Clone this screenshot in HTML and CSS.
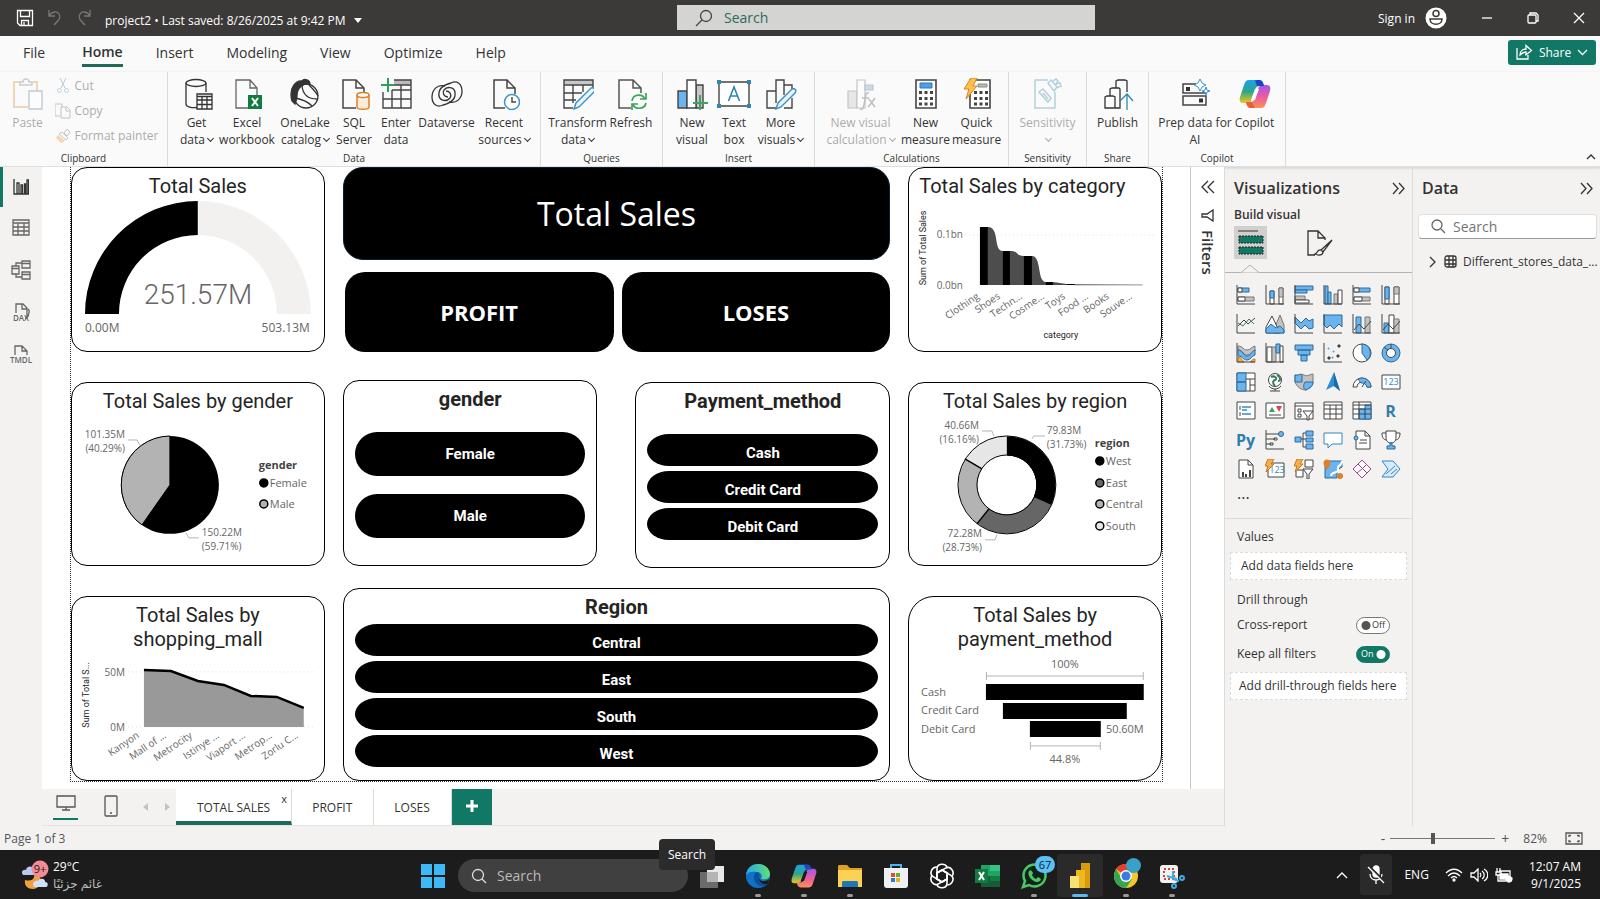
FILE: index.html
```html
<!DOCTYPE html>
<html lang="en">
<head>
    <meta charset="UTF-8">
    <meta name="viewport" content="width=device-width, initial-scale=1.0">
    <title>project2</title>
    <link rel="stylesheet" href="styles.css">
</head>
<body>

    <header class="titlebar">
        <div class="titlebar-left">
            <button class="plain" aria-label="Save"><svg width="18" height="18" viewBox="0 0 18 18" class="line"><path d="M1.5 1.5h15v15H4l-2.500-2.500zM4.500 1.500v6h9v-6M5.500 16.500v-5h7v5M8 16v-3"/></svg></button>
            <button class="plain dim" aria-label="Undo"><svg width="16" height="18" viewBox="0 0 16 18" class="line"><path d="M2 1v6h6M2 7c3-5 8-5 10-2s1 5-5 11"/></svg></button>
            <button class="plain dim" aria-label="Redo"><svg width="16" height="18" viewBox="0 0 16 18" class="line"><path d="M14 1v6H8M14 7C11 2 6 2 4 5s-1 5 5 11"/></svg></button>
            <button class="plain file-name">project2 • Last saved: 8/26/2025 at 9:42 PM <svg width="8" height="5" viewBox="0 0 8 5"><path d="M0 0h8L4 5z" fill="#fff"/></svg></button>
        </div>
        <label class="title-search">
            <svg width="18" height="18" viewBox="0 0 18 18" class="line"><circle cx="11" cy="7" r="5.500"/><path d="M7 11l-6 6"/></svg>
            <input type="text" placeholder="Search" aria-label="Search commands">
        </label>
        <div class="titlebar-right">
            <a href="#" class="sign-in">Sign in</a>
            <svg width="22" height="22" viewBox="0 0 22 22"><circle cx="11" cy="11" r="10.500" fill="#fff"/><g fill="none" stroke="#3b3a39" stroke-width="1.500"><circle cx="11" cy="6.500" r="3"/><path d="M5 12h12c0 7-12 7-12 0z"/></g></svg>
            <button class="plain" aria-label="Minimize"><svg width="12" height="12" viewBox="0 0 12 12" class="line"><path d="M1 6h10"/></svg></button>
            <button class="plain" aria-label="Restore"><svg width="12" height="12" viewBox="0 0 12 12" class="line"><rect x="1" y="3" width="8" height="8" rx="1"/><path d="M3 3V1h6l2 2v6H9"/></svg></button>
            <button class="plain" aria-label="Close"><svg width="12" height="12" viewBox="0 0 12 12" class="line"><path d="M1 1l10 10M11 1L1 11"/></svg></button>
        </div>
    </header>

    <nav class="tabs">
        <a href="#">File</a>
        <a href="#" class="active">Home</a>
        <a href="#">Insert</a>
        <a href="#">Modeling</a>
        <a href="#">View</a>
        <a href="#">Optimize</a>
        <a href="#">Help</a>
        <button class="share"><svg width="17" height="16" viewBox="0 0 17 16" class="line"><path d="M1 4v11h11v-4M4 11c0-4 3-6 6-6V1.500l5.500 5L10 11V8c-3 0-4 1-6 3z"/></svg>Share<svg width="11" height="7" viewBox="0 0 11 7" class="line"><path d="M1 1l4.500 4.500L10 1"/></svg></button>
    </nav>

    <section class="ribbon">
        <div class="group clipboard">
            <div class="tools">
                <button class="tool off"><svg width="32" height="32" viewBox="0 0 32 32"><g fill="none" stroke-width="1.400"><path stroke="#e8a055" stroke-width="2" d="M9 4H2v25h14M21 4h4v9"/><path stroke="#888" d="M8 7V4h3c0-4 6-4 6 0h3v3z"/><path stroke="#6d8595" fill="#fff" d="M17 13h13v18H17z"/></g></svg><span>Paste</span></button>
                <div class="small-tools">
                    <button class="off"><svg width="16" height="16" viewBox="0 0 16 16" fill="none"><path stroke="#777" d="M5 0l5 10M11 0L6 10"/><g stroke="#4a9fd0"><circle cx="4.500" cy="12.500" r="2"/><circle cx="11.500" cy="12.500" r="2"/></g></svg>Cut</button>
                    <button class="off"><svg width="16" height="16" viewBox="0 0 16 16" fill="none" stroke="#777"><path d="M5 13H0V1h7v3M6 4h6l3 3v8H6zM11 4v4h4"/></svg>Copy</button>
                    <button class="off"><svg width="16" height="16" viewBox="0 0 16 16"><path d="M9 5l3-4 3 3-3 4z" fill="none" stroke="#777"/><path d="M4 6l3-2 6 6-2 2z" fill="none" stroke="#777"/><path d="M3 7l7 6-4 2-5-5z" fill="#f0a04b"/></svg>Format painter</button>
                </div>
            </div>
            <h2>Clipboard</h2>
        </div>

        <div class="group data">
            <div class="tools">
                <button class="tool"><svg width="32" height="32" viewBox="0 0 32 32" class="line"><path d="M5 5v21c0 3 6 4 11 3.500M25 5v9"/><ellipse cx="15" cy="5" rx="10" ry="3.500"/><path fill="#fff" d="M16 16h15v15H16z"/><path d="M16 18.500h15M16 22h15M16 26.500h15M21 18v13M26 18v13"/></svg><span>Get <span class="last">data<i class="caret"></i></span></span></button>
                <button class="tool"><svg width="32" height="32" viewBox="0 0 32 32"><path d="M17 30H5V2h14l7 8v8M19 2v8h7" fill="none" stroke="#666" stroke-width="1.300"/><path d="M17 17h14v14H17z" fill="#107c41"/><path d="M21 20l6 8M27 20l-6 8" stroke="#fff" stroke-width="2"/></svg><span>Excel workbook</span></button>
                <button class="tool"><svg width="32" height="32" viewBox="0 0 32 32" class="line"><circle cx="17" cy="18" r="12"/><path d="M3 23C-1 9 8 2 13 3c2-3 8-1 8 3-5-1-14 2-13 14l-2 6z" fill="#333"/><path d="M13 8c1 9 7 13 15 13M6 20c6 1 12 3 17 8M20 7c4 4 7 7 9 11"/></svg><span>OneLake <span class="last">catalog<i class="caret"></i></span></span></button>
                <button class="tool"><svg width="32" height="32" viewBox="0 0 32 32"><path d="M18 30H5V2h13l8 8v4M18 2v8h8" fill="none" stroke="#444" stroke-width="1.500"/><path d="M19 17v12c0 3 12 3 12 0V17" fill="#fdebd9" stroke="#d9822b" stroke-width="1.500"/><ellipse cx="25" cy="17" rx="6" ry="2.500" fill="#fff" stroke="#d9822b" stroke-width="1.500"/></svg><span>SQL Server</span></button>
                <button class="tool"><svg width="32" height="32" viewBox="0 0 32 32"><path d="M14 2h17v5H14z" fill="#bbb"/><path d="M14 2h17v28H3V14M3 21h28M12 12h19M12 12v18M21 7v23M14 7h17" fill="none" stroke="#444" stroke-width="1.400"/><path d="M8 0v14M1 7h14" stroke="#2e9e5b" stroke-width="2"/></svg><span>Enter data</span></button>
                <button class="tool"><svg width="32" height="32" viewBox="0 0 32 32" class="line"><path d="M18 24c8 2 13-4 13-11S26 2 20 5C12 7 7 11 8 18c1 5 8 6 11 2 2-3 0-7-4-7"/><path d="M14 8C6 6 1 12 1 19s5 11 11 8c8-2 13-6 12-13-1-5-8-6-11-2-2 3 0 7 4 7"/></svg><span>Dataverse</span></button>
                <button class="tool"><svg width="32" height="32" viewBox="0 0 32 32"><path d="M17 30H6V2h13l8 8v6M19 2v8h8" fill="none" stroke="#444" stroke-width="1.500"/><circle cx="24" cy="24" r="7.500" fill="#fff" stroke="#3a96c8" stroke-width="1.500"/><path d="M24 19v5h4" fill="none" stroke="#444" stroke-width="1.400"/></svg><span>Recent <span class="last">sources<i class="caret"></i></span></span></button>
            </div>
            <h2>Data</h2>
        </div>

        <div class="group queries">
            <div class="tools">
                <button class="tool"><svg width="32" height="32" viewBox="0 0 32 32"><path d="M2 2h29v5H2z" fill="#c8c8c8"/><path d="M11 30H2V2h29v9M2 7h29M2 15h18M2 22h12M11 7v18M21 7v7" fill="none" stroke="#444" stroke-width="1.400"/><path d="M12 31l2-6 15-15c3-1 5 1 3 4L17 29z" fill="#e8f4fc" stroke="#3a8fc4" stroke-width="1.400"/></svg><span>Transform <span class="last">data<i class="caret"></i></span></span></button>
                <button class="tool"><svg width="32" height="32" viewBox="0 0 32 32"><path d="M16 30H4V2h14l8 8v5M18 2v8h8" fill="none" stroke="#555" stroke-width="1.500"/><path d="M17 23c1-7 10-8 13-2M31 15v6h-6M31 25c-1 6-10 7-13 2M17 32v-6h6" fill="none" stroke="#3fa35c" stroke-width="1.700"/></svg><span>Refresh</span></button>
            </div>
            <h2>Queries</h2>
        </div>

        <div class="group insert">
            <div class="tools">
                <button class="tool"><svg width="32" height="32" viewBox="0 0 32 32" stroke="#444" stroke-width="1.400"><path d="M2 13h9v17H2z" fill="#6cb4ee"/><path d="M20 7h7v23h-7z" fill="#c8c8c8"/><path d="M11 2h9v28h-9z" fill="#fff"/><path d="M24 17v15M17 25h15" stroke="#3fa35c" stroke-width="2"/></svg><span>New visual</span></button>
                <button class="tool"><svg width="34" height="32" viewBox="0 0 34 32"><path d="M2 4h30v24H2z" fill="#fff" stroke="#444" stroke-width="1.400"/><path d="M0 2h4v4H0zM30 2h4v4h-4zM0 26h4v4H0zM30 26h4v4h-4z" fill="#2f87b5"/><path d="M11.500 23L17 9l5.500 14M13.500 18h7" fill="none" stroke="#2f87b5" stroke-width="1.600"/></svg><span>Text box</span></button>
                <button class="tool"><svg width="32" height="32" viewBox="0 0 32 32" fill="none" stroke="#444" stroke-width="1.400"><path d="M11 30H2V13h9M11 25V2h8v15M19 7h8v4M27 20v10h-8"/><path d="M11 31l2-6 14-14c3-1 5 1 3 4L16 29z" fill="#e8f4fc" stroke="#3a8fc4"/></svg><span>More <span class="last">visuals<i class="caret"></i></span></span></button>
            </div>
            <h2>Insert</h2>
        </div>

        <div class="group calculations">
            <div class="tools">
                <button class="tool off"><svg width="32" height="32" viewBox="0 0 32 32" stroke="#777" stroke-width="1.200"><path d="M3 13h9v17H3z" fill="#ccc"/><path d="M12 2h8v28h-8z" fill="#fff"/><path d="M20 7h8v5h-8z" fill="#6cb4ee"/><path d="M24 15c-5-2-3 8-6 15-1 2-3 1-3 1M17 20h7M24 21l6 8M30 20c-2 3-4 6-7 9" fill="none" stroke="#666" stroke-width="1.500"/></svg><span>New visual <span class="last">calculation<i class="caret"></i></span></span></button>
                <button class="tool"><svg width="32" height="32" viewBox="0 0 32 32"><path d="M6 2h20v28H6z" fill="#fff" stroke="#444" stroke-width="1.600"/><path d="M10 5h12v5H10z" fill="#4a9fe8" stroke="#2b7cb8"/><path d="M9 14.500h14M9 20.500h14M9 26h14" stroke="#444" stroke-width="3" stroke-dasharray="3 2.500"/></svg><span>New measure</span></button>
                <button class="tool"><svg width="32" height="32" viewBox="0 0 32 32"><path d="M9 2h20v28H9z" fill="#fff" stroke="#444" stroke-width="1.600"/><path d="M17 6h9v3h-9z" fill="#bbb" stroke="#888"/><path d="M13 14.500h14M13 20.500h14M13 26h14" stroke="#444" stroke-width="3" stroke-dasharray="3 2.500"/><path d="M10 0h6l-4 8h4L5 21l3-10H3z" fill="#ffc14d" stroke="#d98324"/></svg><span>Quick measure</span></button>
            </div>
            <h2>Calculations</h2>
        </div>

        <div class="group sensitivity">
            <div class="tools">
                <button class="tool off"><svg width="32" height="32" viewBox="0 0 32 32" fill="none" stroke="#4a93b8" stroke-width="1.500"><path d="M17 2H4v28h20V14"/><path d="M8 14l4-3 8 9-3 4zM12 15l5 6"/><path d="M17 5l3-3 6 7-3 4zM21 4l4-3 2 2-2 3 4-1 1 3-5 2"/></svg><span>Sensitivity <i class="caret"></i></span></button>
            </div>
            <h2>Sensitivity</h2>
        </div>

        <div class="group share-group">
            <div class="tools">
                <button class="tool"><svg width="32" height="32" viewBox="0 0 32 32" class="line"><path d="M3 19l2-1h6l2 1v11H3zM8 18v-7l2-1h7l1 1v19h-5M14 10V3l2-1h7l2 1v11M18 30v-5"/><path d="M25 32V17M18 23l7-7 6 7" stroke="#2f87b5"/></svg><span>Publish</span></button>
            </div>
            <h2>Share</h2>
        </div>

        <div class="group copilot">
            <div class="tools">
                <button class="tool"><svg width="32" height="32" viewBox="0 0 32 32"><path d="M17 6H4v9h23v-2M4 18h23v9H4z" fill="none" stroke="#444" stroke-width="1.500"/><path d="M7 9h4v4H7zM20 20.500h4v4h-4z" fill="#333"/><path d="M21 1l2 4 4 2-4 2-2 4-2-4-4-2 4-2zM27 9l1 3 3 1-3 1-1 3-1-3-3-1 3-1z" fill="#fff" stroke="#3a96c8"/></svg><span>Prep data for AI</span></button>
                <button class="tool"><svg width="32" height="32" viewBox="0 0 32 32">
                    <defs>
                        <linearGradient id="cpA" x1="0" y1="0" x2="0" y2="1"><stop offset="0" stop-color="#1ba0ea"/><stop offset=".5" stop-color="#2fa58b"/><stop offset="1" stop-color="#f3c51c"/></linearGradient>
                        <linearGradient id="cpB" x1="0" y1="0" x2="0" y2="1"><stop offset="0" stop-color="#a259e6"/><stop offset=".5" stop-color="#ea5aa5"/><stop offset="1" stop-color="#fb9152"/></linearGradient>
                    </defs>
                    <path d="M10 2h10c3 0 4 2 5 6h-4c-3 0-4 1-5 4l-3 9c-1 3-2 4-5 4H5c-4 0-5-2-4-6l4-12c1-3 2-5 5-5z" fill="url(#cpA)"/>
                    <path d="M22 30H12c-3 0-4-2-5-6h4c3 0 4-1 5-4l3-9c1-3 2-4 5-4h3c4 0 5 2 4 6l-4 12c-1 3-2 5-5 5z" fill="url(#cpB)"/>
                    <path d="M16 2h4c3 0 4 2 5 6h-7z" fill="#1b46c4"/><path d="M16 30h-4c-3 0-4-2-5-6h6z" fill="#e8603c"/><path d="M16 11h4l-4 11h-4z" fill="#fff"/></svg><span>Copilot</span></button>
            </div>
            <h2>Copilot</h2>
        </div>
        <button class="plain collapse" aria-label="Collapse the ribbon"><svg width="10" height="7" viewBox="0 0 10 7" class="line"><path d="M1 6l4-4 4 4"/></svg></button>
    </section>

    <main class="workspace">
        <nav class="rail">
            <button class="current" aria-label="Report view"><svg width="16" height="16" viewBox="0 0 16 16" class="line"><path d="M1 0v15h15M4 15V4h2v11M8 15V6h1.500v9M11.500 15V5h1v10M14 15V1h1.500v14"/></svg></button>
            <button aria-label="Table view"><svg width="18" height="18" viewBox="0 0 18 18" class="line"><path d="M1 1h16v15H1zM1 4h16M1 8h16M1 12h16M6 4v12M12 4v12"/></svg></button>
            <button aria-label="Model view"><svg width="20" height="20" viewBox="0 0 20 20" class="line"><path d="M1 6h7v8H1zM1 8.500h7M11 1h8v7h-8zM11 3.500h8M11 12h8v7h-8zM11 14.500h8M5 6V3h6M5 14v3h6"/></svg></button>
            <button aria-label="DAX query view"><svg width="20" height="20" viewBox="0 0 20 20" class="line"><path d="M5 11V2h7l4 4v10h-2M11 2v5h5M17 7c2 1 1 6-1 9"/></svg><small>DAX</small></button>
            <button aria-label="TMDL view"><svg width="20" height="20" viewBox="0 0 20 20" class="line"><path d="M4 11V2h7l5 5v4M11 2v5h5"/></svg><small>TMDL</small></button>
        </nav>

        <div class="center">
            <div class="canvas">
                <div class="page">
                    <div class="side">
                        <article class="card">
                            <h3>Total Sales</h3>
                            <svg class="chart" viewBox="0 0 252 150">
                                <path d="M13 116A113 113 0 0 1 126 3V37A79 79 0 0 0 47 116z"/>
                                <path d="M126 3A113 113 0 0 1 239 116H205A79 79 0 0 0 126 37z" fill="#f2f1f0"/>
                                <text x="126" y="106" class="value">251.57M</text>
                                <text x="13" y="134" class="t12">0.00M</text>
                                <text x="238" y="134" class="t12 end">503.13M</text>
                            </svg>
                        </article>
                        <article class="card">
                            <h3>Total Sales by gender</h3>
                            <svg class="chart" viewBox="0 0 252 150">
                                <circle cx="98" cy="72" r="49"/>
                                <path d="M98 72L70 112A49 49 0 0 1 98 23z" fill="#b3b3b3" stroke="#000"/>
                                <path d="M56 27h9l3 5M114 120l3 5h10" class="leader"/>
                                <text x="53" y="25" class="end">101.35M</text>
                                <text x="53" y="39" class="end">(40.29%)</text>
                                <text x="130" y="123">150.22M</text>
                                <text x="130" y="137">(59.71%)</text>
                                <text x="187" y="56" class="t11 strong">gender</text>
                                <g stroke="#000" stroke-width="1.500"><circle cx="192" cy="70" r="4"/><circle cx="192" cy="91" r="4" fill="#b3b3b3"/></g>
                                <text x="198" y="74" class="t11">Female</text>
                                <text x="198" y="95" class="t11">Male</text>
                            </svg>
                        </article>
                        <article class="card">
                            <h3>Total Sales by shopping_mall</h3>
                            <svg class="chart" viewBox="0 0 252 128">
                                <path d="M56 21h186M56 76h186" class="gridline"/>
                                <path d="M72 19l27 1 27 10 26 4 27 11 26 1 27 11v19H72z" fill="#999"/>
                                <path d="M72 19l27 1 27 10 26 4 27 11 26 1 27 11" fill="none" stroke="#000" stroke-width="2.500"/>
                                <text x="53" y="25" class="end">50M</text>
                                <text x="53" y="80" class="end">0M</text>
                                <text transform="translate(17 44) rotate(-90)" class="axis">Sum of Total S...</text>
                                <g class="end">
                                    <text transform="translate(68 86) rotate(-34)">Kanyon</text>
                                    <text transform="translate(95 86) rotate(-34)">Mall of ...</text>
                                    <text transform="translate(121 86) rotate(-34)">Metrocity</text>
                                    <text transform="translate(148 86) rotate(-34)">Istinye ...</text>
                                    <text transform="translate(174 86) rotate(-34)">Viaport ...</text>
                                    <text transform="translate(201 86) rotate(-34)">Metrop...</text>
                                    <text transform="translate(227 86) rotate(-34)">Zorlu C...</text>
                                </g>
                            </svg>
                        </article>
                    </div>

                    <div class="middle">
                        <h1 class="banner">Total Sales</h1>
                        <div class="nav-buttons">
                            <button>PROFIT</button>
                            <button>LOSES</button>
                        </div>
                        <div class="slicers">
                            <article class="card slicer tall">
                                <h3>gender</h3>
                                <button>Female</button>
                                <button>Male</button>
                            </article>
                            <article class="card slicer">
                                <h3>Payment_method</h3>
                                <button>Cash</button>
                                <button>Credit Card</button>
                                <button>Debit Card</button>
                            </article>
                        </div>
                        <article class="card slicer region">
                            <h3>Region</h3>
                            <button>Central</button>
                            <button>East</button>
                            <button>South</button>
                            <button>West</button>
                        </article>
                    </div>

                    <div class="side">
                        <article class="card">
                            <h3 class="left">Total Sales by category</h3>
                            <svg class="chart" viewBox="0 0 252 150">
                                <path d="M56 37h190" class="gridline"/>
                                <path d="M79 29c12 0 5 24 15 24h7c10 0 5 5 14 5h8c10 0 5 26 14 26h7l14 2h8l68 1H79z" fill="#4d4d4d"/>
                                <path d="M71 29h8v58h-8zM94 53h7v34h-7zM115 58h8v29h-8zM137 84h7v3h-7zM158 86h8v1h-8z"/>
                                <path d="M166 87h68" stroke="#999"/>
                                <text x="54" y="40" class="end">0.1bn</text>
                                <text x="54" y="91" class="end">0.0bn</text>
                                <text transform="translate(17 50) rotate(-90)" class="axis">Sum of Total Sales</text>
                                <text x="152" y="140" class="axis">category</text>
                                <g class="end">
                                    <text transform="translate(71 100) rotate(-34)">Clothing</text>
                                    <text transform="translate(92 100) rotate(-34)">Shoes</text>
                                    <text transform="translate(114 100) rotate(-34)">Techn...</text>
                                    <text transform="translate(136 100) rotate(-34)">Cosme...</text>
                                    <text transform="translate(157 100) rotate(-34)">Toys</text>
                                    <text transform="translate(180 100) rotate(-34)">Food ...</text>
                                    <text transform="translate(201 100) rotate(-34)">Books</text>
                                    <text transform="translate(224 100) rotate(-34)">Souve...</text>
                                </g>
                            </svg>
                        </article>
                        <article class="card">
                            <h3>Total Sales by region</h3>
                            <svg class="chart" viewBox="0 0 252 150">
                                <!-- each arc is its share of a 100 unit circle -->
                                <g fill="none" stroke-width="19" transform="rotate(-90 98 72)">
                                    <circle cx="98" cy="72" r="39" pathLength="100" stroke="#e6e6e6"/>
                                    <circle cx="98" cy="72" r="39" pathLength="100" stroke="#b3b3b3" stroke-dasharray="83.84 100"/>
                                    <circle cx="98" cy="72" r="39" pathLength="100" stroke="#666" stroke-dasharray="60.46 100"/>
                                    <circle cx="98" cy="72" r="39" pathLength="100" stroke="#000" stroke-dasharray="31.73 100"/>
                                </g>
                                <g fill="none" stroke="#000"><circle cx="98" cy="72" r="49"/><circle cx="98" cy="72" r="30"/><path d="M68 111l12-15M56 46l17 10" stroke-width="1.500"/></g>
                                <path d="M73 18h10l2 5M123 26l2-3h11M76 127h10l2-5" class="leader"/>
                                <text x="70" y="16" class="end">40.66M</text>
                                <text x="70" y="30" class="end">(16.16%)</text>
                                <text x="138" y="21">79.83M</text>
                                <text x="138" y="35">(31.73%)</text>
                                <text x="73" y="124" class="end">72.28M</text>
                                <text x="73" y="138" class="end">(28.73%)</text>
                                <text x="186" y="34" class="t11 strong">region</text>
                                <g stroke="#000" stroke-width="1.500"><circle cx="191" cy="48" r="4"/><circle cx="191" cy="70" r="4" fill="#666"/><circle cx="191" cy="91" r="4" fill="#b3b3b3"/><circle cx="191" cy="113" r="4" fill="#e6e6e6"/></g>
                                <text x="197" y="52" class="t11">West</text>
                                <text x="197" y="74" class="t11">East</text>
                                <text x="197" y="95" class="t11">Central</text>
                                <text x="197" y="117" class="t11">South</text>
                            </svg>
                        </article>
                        <article class="card rounder">
                            <h3>Total Sales by payment_method</h3>
                            <svg class="chart" viewBox="0 0 252 128">
                                <path d="M77 33h158v16H77zM94 52h124v16H94zM121 70h71v16h-71z"/>
                                <path d="M77.500 21v8M77.500 25h157M234.500 21v8M121.500 91v8M121.500 95h70M191.500 91v8" class="leader"/>
                                <text x="156" y="17" class="t11 mid">100%</text>
                                <text x="156" y="112" class="t11 mid">44.8%</text>
                                <text x="12" y="45" class="t11">Cash</text>
                                <text x="12" y="63" class="t11">Credit Card</text>
                                <text x="12" y="82" class="t11">Debit Card</text>
                                <text x="235" y="82" class="t11 end">50.60M</text>
                            </svg>
                        </article>
                    </div>
                </div>

                <aside class="filters">
                    <button class="plain" aria-label="Expand filters"><svg width="14" height="14" viewBox="0 0 14 14" class="line"><path d="M7 1L1 7l6 6M13 1L7 7l6 6"/></svg></button>
                    <svg width="13" height="13" viewBox="0 0 13 13" class="line"><path d="M12 1v11L6 8H1V5h5z"/></svg>
                    <h2>Filters</h2>
                </aside>
            </div>

            <div class="page-tabs">
                <button class="view-mode on" aria-label="Desktop layout"><svg width="20" height="16" viewBox="0 0 20 16" class="line"><path d="M1 1h18v11H1zM10 12v3M6 15h8"/></svg></button>
                <button class="view-mode" aria-label="Mobile layout"><svg width="14" height="22" viewBox="0 0 14 22" class="line"><rect x="1" y="1" width="12" height="20" rx="1"/><path d="M6 18h2"/></svg></button>
                <div class="arrows"><svg width="5" height="8" viewBox="0 0 5 8"><path d="M5 0v8L0 4z"/></svg><svg width="5" height="8" viewBox="0 0 5 8"><path d="M0 0v8l5-4z"/></svg></div>
                <a href="#" class="page-tab selected">TOTAL SALES</a>
                <button class="plain close-page" aria-label="Delete page">x</button>
                <a href="#" class="page-tab">PROFIT</a>
                <a href="#" class="page-tab">LOSES</a>
                <button class="add-page" aria-label="New page"><svg width="12" height="12" viewBox="0 0 12 12"><path d="M6 0v12M0 6h12" stroke="#fff" stroke-width="3"/></svg></button>
            </div>
        </div>

        <aside class="pane visualizations">
            <div class="pane-head"><h2>Visualizations</h2><button class="plain" aria-label="Collapse"><svg width="13" height="13" viewBox="0 0 13 13" class="line"><path d="M1 1l5 5.500L1 12M7 1l5 5.500L7 12"/></svg></button></div>
            <h3>Build visual</h3>
            <div class="modes">
                <button class="chosen" aria-label="Build visual"><svg width="26" height="26" viewBox="0 0 26 26"><path d="M0 1h20" stroke="#333"/><g fill="#117865" stroke="#222" stroke-dasharray="2 1"><path d="M1 6h24v7H1zM1 17h24v7H1z"/></g></svg></button>
                <button aria-label="Format visual"><svg width="26" height="26" viewBox="0 0 26 26" class="line"><path d="M8 25H1V1h10l7 7v2M11 1v7h7M25 10L14 20l2 2zM14 20c-4-1-3 3-6 4 4 2 8 1 8-2"/></svg></button>
            </div>
            <svg class="pointer" width="20" height="9" viewBox="0 0 20 9"><path d="M0 8.500h1L10 1l9 7.500h1" fill="#f3f2f1" stroke="#b5b3b1"/></svg>
            <div class="viz-grid">
                <button aria-label="Stacked bar chart"><svg viewBox="0 0 20 20"><path class="b" d="M2 3h11v4H2z"/><path class="w" d="M2 3h4v4H2z"/><path class="g" d="M2 12h16v4H2z"/><path class="w" d="M2 12h7v4H2z"/><path d="M1 0v19h18"/></svg></button>
                <button aria-label="Stacked column chart"><svg viewBox="0 0 20 20"><path class="w" d="M5 6h4v13H5z"/><path class="b" d="M5 6h4v7H5z"/><path class="w" d="M14 3h4v16h-4z"/><path class="g" d="M14 3h4v9h-4z"/><path d="M1 0v19h18"/></svg></button>
                <button aria-label="Clustered bar chart"><svg viewBox="0 0 20 20"><path class="b" d="M1 1h18v4H1z"/><path class="b" d="M1 5h12v3H1z"/><path class="g" d="M1 11h10v4H1z"/><path class="w" d="M1 15h14v3H1z"/><path d="M1 0v19h18"/></svg></button>
                <button aria-label="Clustered column chart"><svg viewBox="0 0 20 20"><path class="b" d="M2 1h3v18H2z"/><path class="b" d="M5 7h3v12H5z"/><path class="g" d="M11 9h4v10h-4z"/><path class="w" d="M15 5h4v14h-4z"/><path d="M1 0v19h18"/></svg></button>
                <button aria-label="100% stacked bar chart"><svg viewBox="0 0 20 20"><path class="b" d="M2 3h16v4H2z"/><path class="w" d="M2 3h5v4H2z"/><path class="g" d="M2 12h16v4H2z"/><path class="w" d="M2 12h8v4H2z"/><path d="M1 0v19h18"/></svg></button>
                <button aria-label="100% stacked column chart"><svg viewBox="0 0 20 20"><path class="w" d="M4 2h4v17H4z"/><path class="b" d="M4 2h4v12H4z"/><path class="w" d="M13 2h5v17h-5z"/><path class="g" d="M13 2h5v7h-5z"/><path d="M1 0v19h18"/></svg></button>

                <button aria-label="Line chart"><svg viewBox="0 0 20 20"><path d="M1 0v19h18"/><path d="M2 12l6-6 4 4 7-6"/><path d="M2 9l5 3 6-7 5 5" class="green"/></svg></button>
                <button aria-label="Area chart"><svg viewBox="0 0 20 20"><path class="g" d="M9 15l6-14 4 10v8H9z"/><path class="w" d="M1 13l6-11 8 17H1z"/><path class="b" d="M1 15l5-5 5 4 4-2 4 4v3H1z"/></svg></button>
                <button aria-label="Stacked area chart"><svg viewBox="0 0 20 20"><path class="b" d="M1 3l6 6 5-5 3 3 4-2v9l-4 1-4-4-4 4-6-6z"/><path d="M1 0v19h18"/></svg></button>
                <button aria-label="100% stacked area chart"><svg viewBox="0 0 20 20"><path class="b" d="M1 1h18v12l-3-3-5 5-4-4-3 3-3-3z"/><path d="M1 0v19h18"/></svg></button>
                <button aria-label="Line and stacked column chart"><svg viewBox="0 0 20 20"><path class="b" d="M4 3h5v16H4z"/><path class="g" d="M13 3h5v16h-5z"/><path d="M1 0v19h18M2 16l5-6 5 5 7-8"/></svg></button>
                <button aria-label="Line and clustered column chart"><svg viewBox="0 0 20 20"><path class="b" d="M3 9h5v10H3z"/><path class="w" d="M8 1h5v18H8z"/><path class="g" d="M13 5h5v14h-5z"/><path d="M1 0v19h18M2 16l5-6 5 5 7-8"/></svg></button>

                <button aria-label="Ribbon chart"><svg viewBox="0 0 20 20"><path class="g" d="M2 3c5 0 5 4 9 4s4-3 8-4v5c-4 1-4 4-8 4S7 7 2 7z"/><path class="b" d="M2 7c5 0 5 6 9 6s4-5 8-6v5c-4 1-4 5-8 5s-4-4-9-4z"/><path class="o" d="M2 14c3 0 4 3 6 5H2zM14 19c2-2 3-3 5-3v3z"/><path d="M1 0v19h18"/></svg></button>
                <button aria-label="Waterfall chart"><svg viewBox="0 0 20 20"><path class="w" d="M2 4h5v15H2z"/><path class="g" d="M7 4h4v15H7z"/><path class="b" d="M11 1h4v9h-4z"/><path class="w" d="M15 3h3v16h-3z"/><path d="M1 0v19h18"/></svg></button>
                <button aria-label="Funnel"><svg viewBox="0 0 20 20"><path class="b" d="M1 2h18v5H1zM4 7h12v5H4zM7 12h6v6H7z"/></svg></button>
                <button aria-label="Scatter chart"><svg viewBox="0 0 20 20"><path d="M1 0v19h18"/><path d="M5 14h2v2H5zM15 2h2v2h-2zM14 12h2v2h-2z" fill="#333"/><path d="M5 5h1v1H5zM10 8h1v1h-1zM9 14h1v1H9z" stroke="#4a9fe0"/></svg></button>
                <button aria-label="Pie chart"><svg viewBox="0 0 20 20"><circle class="w" cx="10" cy="10" r="9"/><path class="b" d="M10 1a9 9 0 0 1 5 16l-5-7z"/></svg></button>
                <button aria-label="Donut chart"><svg viewBox="0 0 20 20"><circle class="b" cx="10" cy="10" r="9"/><circle class="w" cx="10" cy="10" r="4.500"/><path d="M10 1v4M3 4l4 3"/></svg></button>

                <button aria-label="Treemap"><svg viewBox="0 0 20 20"><path class="w" d="M1 1h18v18H1z"/><path class="b" d="M1 1h9v9H1zM1 10h9v9H1z"/><path d="M10 7h9M14 7v12M14 13h5"/></svg></button>
                <button aria-label="Map"><svg viewBox="0 0 20 20"><circle class="w" cx="10" cy="8" r="6.500"/><path class="green" d="M6 5c4-2 7 2 4 3s-2 4 0 6M12 3c4 2 4 6 1 6" stroke-width="2"/><path d="M16 14c-3 4-9 4-12 0M10 17v2M5 19h10"/></svg></button>
                <button aria-label="Filled map"><svg viewBox="0 0 20 20"><path class="g" d="M1 3c4 1 5-2 9 0s6-1 9-1v8c0 4-3 6-7 8-5 0-9-3-11-8z"/><path class="b" d="M1 3c4 1 5-2 7 0v7H1zM11 10h8c0 4-3 6-7 8-3-1-3-5-1-8z"/></svg></button>
                <button aria-label="Azure map"><svg viewBox="0 0 20 20"><path d="M11 0l6 19-6-5-8 4z" fill="#2f8fd0" stroke="none"/><path d="M11 0l6 19-6-5z" fill="#1a6ca8" stroke="none"/></svg></button>
                <button aria-label="Gauge"><svg viewBox="0 0 20 20"><path class="w" d="M1 15a9 9 0 0 1 18 0h-4a5 5 0 0 0-10 0z"/><path class="b" d="M6 7a9 9 0 0 1 13 8h-4a5 5 0 0 0-6-4z"/><path d="M10 15l4-6"/></svg></button>
                <button aria-label="Card"><svg viewBox="0 0 20 20"><path class="w" d="M1 3h18v14H1z"/><text x="10" y="13">123</text></svg></button>

                <button aria-label="Multi-row card"><svg viewBox="0 0 20 20"><path class="w" d="M1 1h18v17H1z"/><path d="M4 5v4M4 11v4"/><path d="M6 6h9M6 9h5M6 13h9" stroke="#2f8fd0" stroke-width="1.500"/></svg></button>
                <button aria-label="KPI"><svg viewBox="0 0 20 20"><path class="w" d="M1 2h18v15H1z"/><path d="M4 11l3-5 3 5z" fill="#3fa35c" stroke="none"/><path d="M11 5h6l-3 6z" fill="#d64550" stroke="none"/><path d="M4 14h12"/></svg></button>
                <button aria-label="Slicer"><svg viewBox="0 0 20 20"><path class="w" d="M1 2h18v16H1zM1 5h18M4 8h3v3H4zM4 13h3v3H4z"/><path class="w" d="M9 10h10l-4 5v4h-2v-4z"/></svg></button>
                <button aria-label="Table"><svg viewBox="0 0 20 20"><path class="w" d="M1 1h18v17H1zM1 4h18M1 8h18M1 13h18M7 4v14M13 4v14"/></svg></button>
                <button aria-label="Matrix"><svg viewBox="0 0 20 20"><path class="w" d="M1 1h18v17H1z"/><path class="b" d="M7 8h6v10H7zM13 4h6v14h-6z"/><path d="M1 4h18M1 8h18M1 13h18M7 1v17"/></svg></button>
                <button aria-label="R script visual" class="letters">R</button>

                <button aria-label="Python visual" class="letters">Py</button>
                <button aria-label="Key influencers"><svg viewBox="0 0 20 20"><path d="M1 0v19h18M1 4h13M1 9h9M1 14h5"/><circle class="b" cx="16" cy="4" r="2.500"/><path d="M9 8h3v2H9zM5 13h3v2H5z"/></svg></button>
                <button aria-label="Decomposition tree"><svg viewBox="0 0 20 20"><path d="M6 9h6M9 3v14M9 3h4M9 17h4"/><path class="b" d="M1 7h6v5H1zM12 1h7v5h-7zM12 8h7v4h-7zM12 14h7v5h-7z"/></svg></button>
                <button aria-label="Q&amp;A"><svg viewBox="0 0 20 20"><path fill="#fff" stroke="#2f87c5" d="M1 3h18v11H9l-4 4v-4H1z"/></svg></button>
                <button aria-label="Narrative"><svg viewBox="0 0 20 20"><path class="w" d="M4 1h9l5 5v13H4zM13 1v5h5"/><path d="M8 10h7M7 13h8"/><circle class="b" cx="4" cy="8" r="2"/></svg></button>
                <button aria-label="Goals"><svg viewBox="0 0 20 20"><path class="w" d="M5 3H1c0 5 2 7 5 7M15 3h4c0 5-2 7-5 7"/><path class="w" d="M5 1h10v6c0 4-2 6-5 6s-5-2-5-6z"/><path class="b" d="M9 13h2v3h3v3H6v-3h3z"/></svg></button>

                <button aria-label="Paginated report"><svg viewBox="0 0 20 20"><path class="w" d="M3 1h9l5 5v13H3zM12 1v5h5"/><path d="M7 18v-5M10 18v-3M14 18v-7" stroke-width="2"/></svg></button>
                <button aria-label="Card (new)"><svg viewBox="0 0 20 20"><path class="w" d="M3 4h16v14H3z"/><text x="12" y="14">123</text><path class="o" d="M3 0h6L6 5h3l-8 8 2-6H0z"/></svg></button>
                <button aria-label="Slicer (new)"><svg viewBox="0 0 20 20"><path class="w" d="M11 1h8v7h-8zM2 11h7v7H2z"/><path class="o" d="M3 0h6L6 5h3l-8 8 2-6H0z"/><path class="w" d="M9 10h10l-4 5v5h-2v-5z"/></svg></button>
                <button aria-label="ArcGIS map"><svg viewBox="0 0 20 20"><path class="b" d="M2 2h17v6l-5 3v8H2z"/><path d="M8 17c0-5 8-2 7-7s4-2 4-8" stroke="#fff" stroke-width="2"/><circle cx="4" cy="4" r="3.500" fill="#d9822b" stroke="none"/><circle cx="17" cy="17" r="3" fill="#d9822b" stroke="none"/><path d="M1 6h6l-3 5z" fill="#d9822b" stroke="none"/></svg></button>
                <button aria-label="Power Apps"><svg viewBox="0 0 20 20" class="purple"><path d="M6 5l4-4 9 9-9 9-9-9zM6 5l9 9M10 10l-5 4M14 6l-4 4"/></svg></button>
                <button aria-label="Power Automate"><svg viewBox="0 0 20 20"><path d="M1 2h11l7 8-7 8H1l6-8zM5 15l9-8M10 15l6-5" fill="#d7ebfa" stroke="#2f87c5"/></svg></button>
            </div>
            <button class="plain more" aria-label="More visuals">...</button>
            <div class="wells">
                <h3>Values</h3>
                <div class="well indent">Add data fields here</div>
                <h3>Drill through</h3>
                <div class="option"><label for="cross">Cross-report</label><span class="switch"><input type="checkbox" id="cross"><span>Off</span></span></div>
                <div class="option"><label for="keep">Keep all filters</label><span class="switch"><input type="checkbox" id="keep" checked><span>On</span></span></div>
                <div class="well">Add drill-through fields here</div>
            </div>
        </aside>

        <aside class="pane fields">
            <div class="pane-head"><h2>Data</h2><button class="plain" aria-label="Collapse"><svg width="13" height="13" viewBox="0 0 13 13" class="line"><path d="M1 1l5 5.500L1 12M7 1l5 5.500L7 12"/></svg></button></div>
            <label class="field-search"><svg width="15" height="15" viewBox="0 0 15 15" class="line"><circle cx="6" cy="6" r="5"/><path d="M10 10l4 4"/></svg><input type="text" placeholder="Search" aria-label="Search fields"></label>
            <a href="#" class="table-row"><svg width="7" height="12" viewBox="0 0 7 12" class="line"><path d="M1 1l5 5-5 5"/></svg><svg width="13" height="13" viewBox="0 0 13 13" class="line"><rect x="1" y="1" width="11" height="11" rx="2"/><path d="M1 5h11M1 9h11M5 1v11M9 1v11"/></svg><span>Different_stores_data_...</span></a>
        </aside>
    </main>

    <footer class="status">
        <span>Page 1 of 3</span>
        <div class="zoom">
            <button class="plain" aria-label="Zoom out">-</button>
            <input type="range" min="10" max="190" value="82" aria-label="Zoom">
            <button class="plain" aria-label="Zoom in">+</button>
            <span>82%</span>
            <button class="plain" aria-label="Fit to page"><svg width="18" height="13" viewBox="0 0 18 13" class="line"><path d="M1 1h16v11H1zM4 5V3.500h2M12 3.500h2V5M14 8v1.500h-2M6 9.500H4V8"/></svg></button>
        </div>
    </footer>

    <div class="taskbar">
        <div class="weather">
            <svg width="28" height="30" viewBox="0 0 28 30"><path d="M4 20c8 2 10-2 9-7 9 2 10 15-1 16-5 0-9-3-8-9z" fill="#f2a03d"/><path d="M13 27c-3-5 2-7 4-6 2-4 8-2 7 1 4 0 3 5 1 5z" fill="#cfe0fa"/><path d="M2 15c-3-4 1-6 3-5 1-5 8-4 8 0 3 0 3 5 0 5z" fill="#b9c9f2"/><circle cx="19" cy="9" r="8.500" fill="#f28b96"/><text x="19" y="13" text-anchor="middle">9+</text></svg>
            <p>29°C<br><span lang="ar">غائم جزئيًا</span></p>
        </div>
        <div class="apps">
            <button aria-label="Start"><svg width="26" height="26" viewBox="0 0 26 26"><path d="M1 1h11v11H1zM14 1h11v11H14zM1 14h11v11H1zM14 14h11v11H14z" fill="#3fb9f5"/></svg></button>
            <div class="search-wrap">
                <label class="task-search"><svg width="16" height="16" viewBox="0 0 16 16" class="line"><circle cx="7" cy="7" r="5.500"/><path d="M11 11l4 4"/></svg><input type="text" placeholder="Search" aria-label="Search Windows"></label>
                <span class="tooltip">Search</span>
            </div>
            <button aria-label="Task view"><svg width="26" height="26" viewBox="0 0 26 26"><path d="M1 9h18v16H1z" fill="#6b6b6b"/><path d="M8 3h17v16H8z" fill="#e8e8e8"/><path d="M8 9h11v10H8z" fill="#b4b4b4"/></svg></button>
            <button class="open" aria-label="Edge"><svg width="26" height="26" viewBox="0 0 26 26"><defs><linearGradient id="edge" x1="0" y1="0" x2="1" y2="0"><stop offset="0" stop-color="#28a8ea"/><stop offset="1" stop-color="#5fe070"/></linearGradient></defs><circle cx="13" cy="13" r="12" fill="#1170c8"/><path d="M1 12C2 4 8 1 13 1c8 0 12 6 12 10 0 5-5 6-9 5 2-3 0-7-4-7C7 8 3 9 1 12z" fill="url(#edge)"/><path d="M12 9c-5 2-4 11 3 14 4 1 7 0 9-3-6 2-11-1-10-6 0 0 2-3-2-5z" fill="#0c4f9e"/><path d="M14 14c0 2 1 3 3 4 3 0 5 0 7-2l-1 5c-5 1-10-2-9-7z" fill="#1c1c1c"/></svg></button>
            <button class="open" aria-label="Copilot"><svg width="26" height="26" viewBox="0 0 32 32"><path d="M10 2h10c3 0 4 2 5 6h-4c-3 0-4 1-5 4l-3 9c-1 3-2 4-5 4H5c-4 0-5-2-4-6l4-12c1-3 2-5 5-5z" fill="url(#cpA)"/><path d="M22 30H12c-3 0-4-2-5-6h4c3 0 4-1 5-4l3-9c1-3 2-4 5-4h3c4 0 5 2 4 6l-4 12c-1 3-2 5-5 5z" fill="url(#cpB)"/><path d="M16 2h4c3 0 4 2 5 6h-7z" fill="#1b46c4"/><path d="M16 11h4l-4 11h-4z" fill="#1c1c1c"/></svg></button>
            <button class="open" aria-label="File Explorer"><svg width="26" height="26" viewBox="0 0 26 26"><path d="M1 3c0-1 1-1 2-1h7l3 3h12v19H1z" fill="#e0a020"/><path d="M1 7h24v17H1z" fill="#fdd155"/><path d="M5 24v-4c0-2 1-2 2-2h12c1 0 2 0 2 2v4z" fill="#1e78b8"/></svg></button>
            <button aria-label="Store"><svg width="26" height="26" viewBox="0 0 26 26"><path d="M8 6V2h10v4" fill="none" stroke="#4ab4e6" stroke-width="2"/><path d="M1 5h24v17c0 2-1 3-3 3H4c-2 0-3-1-3-3z" fill="#f0f0f4"/><path d="M8 10h4v4H8z" fill="#d8532c"/><path d="M13 10h4v4h-4z" fill="#6fa82e"/><path d="M8 15h4v4H8z" fill="#2b7cc8"/><path d="M13 15h4v4h-4z" fill="#e8b022"/></svg></button>
            <button aria-label="ChatGPT"><svg width="26" height="26" viewBox="0 0 26 26" fill="none" stroke="#fff" stroke-width="1.600"><g id="petal"><path d="M8 14V6c0-6 8-6 10-2M8 10l5-3 6 3.500"/></g><use href="#petal" transform="rotate(60 13 13)"/><use href="#petal" transform="rotate(120 13 13)"/><use href="#petal" transform="rotate(180 13 13)"/><use href="#petal" transform="rotate(240 13 13)"/><use href="#petal" transform="rotate(300 13 13)"/></svg></button>
            <button aria-label="Excel"><svg width="26" height="26" viewBox="0 0 26 26"><path d="M6 2h19v22H6z" fill="#21a366"/><path d="M6 13h19v11H6z" fill="#185c37"/><path d="M15 2h10v6H15z" fill="#33c481"/><path d="M15 13h10v5H15z" fill="#107c41"/><path d="M0 6h13v14H0z" fill="#107c41"/><path d="M4 9l5 8M9 9l-5 8" stroke="#fff" stroke-width="2"/></svg></button>
            <button class="open" aria-label="WhatsApp"><svg width="26" height="26" viewBox="0 0 26 26"><path d="M2 24l2-6a11 11 0 1 1 4 4z" fill="#0d2416" stroke="#4bc768" stroke-width="2.500"/><path d="M8 8c2-2 3 0 4 2l-1 2c1 2 2 3 4 4l2-2c2 1 4 2 2 4-5 4-14-5-11-10z" fill="#4bc768"/></svg><span class="badge">67</span></button>
            <button class="open front" aria-label="Power BI"><svg width="26" height="26" viewBox="0 0 26 26"><path d="M14 0h9v25H14z" fill="#d89a10"/><path d="M9 7h9v18H9z" fill="#edb91f"/><path d="M3 13h9v12H3z" fill="#fbe07a"/></svg></button>
            <button class="open" aria-label="Chrome"><svg width="26" height="26" viewBox="0 0 26 26"><circle cx="13" cy="13" r="12" fill="#f5c828"/><path d="M13 13L3 6C7-1 20-1 24 8H13z" fill="#e2402f"/><path d="M3 6l6 10 4 9C3 25-2 15 3 6z" fill="#32a552"/><path d="M9 16l4 9 6-9z" fill="#32a552"/><circle cx="13" cy="13" r="6" fill="#fff"/><circle cx="13" cy="13" r="4.500" fill="#3b7de8"/></svg><span class="badge face"></span></button>
            <button class="open" aria-label="Snipping Tool"><svg width="26" height="26" viewBox="0 0 26 26"><rect x="1" y="2" width="18" height="18" rx="3" fill="#f2f2f2"/><path d="M5 6h10v10H5z" fill="none" stroke="#c44a3c" stroke-width="2" stroke-dasharray="2 2"/><g fill="none" stroke="#45a8dc" stroke-width="2"><path d="M14 8v8l6 2M8 13l10 3"/><circle cx="23" cy="15" r="2"/><circle cx="15" cy="23" r="2"/></g></svg></button>
        </div>
        <div class="tray">
            <svg width="12" height="8" viewBox="0 0 12 8" class="line"><path d="M1 7l5-5 5 5"/></svg>
            <span class="mic"><svg width="18" height="20" viewBox="0 0 18 20" class="line"><rect x="6" y="1" width="6" height="11" rx="3" fill="#fff"/><path d="M3 9c0 8 12 8 12 0M9 15v4"/><path d="M2 1l16 16" stroke="#2a2a2a" stroke-width="2"/><path d="M1 2l16 16"/></svg></span>
            <span class="lang">ENG</span>
            <svg width="18" height="14" viewBox="0 0 18 14" class="line"><path d="M1 5c5-5 11-5 16 0M3 8c4-4 8-4 12 0M6 10c2-2 4-2 6 0"/><circle cx="9" cy="12" r="1"/></svg>
            <svg width="18" height="14" viewBox="0 0 18 14" class="line"><path d="M1 5h3l4-4v12L4 9H1zM10 5c1 1 1 3 0 4M12 3c3 2 3 6 0 8M14 1c5 3 5 9 0 12"/></svg>
            <svg width="18" height="16" viewBox="0 0 18 16" class="line"><path d="M4 4h11v8M2 1v4M5 1v4M1 5h5v3H1zM3 8v6h8"/><path d="M5 7h8v5H5z" fill="#fff"/><path d="M14 9l3 2c0 3-1 4-3 4s-3-1-3-4z" fill="#fff"/></svg>
            <p class="clock">12:07 AM<br>9/1/2025</p>
        </div>
    </div>

</body>
</html>
```

FILE: styles.css
```css
* {
    box-sizing: border-box;
}

body {
    margin: 0;
    min-height: 100vh;
    display: flex;
    flex-direction: column;
    font-family: "Open Sans", "Noto Sans", "DejaVu Sans", sans-serif;
    font-size: 12px;
    color: #333;
    background-color: #f3f2f1;
}

h1, h2, h3, p {
    margin: 0;
    font-size: 12px;
    font-weight: normal;
}

a {
    color: inherit;
    text-decoration: none;
}

button, input {
    font: inherit;
    color: inherit;
    padding: 0;
    border: none;
    background: none;
}

button {
    cursor: pointer;
}

svg {
    flex: none;
}

.line {
    fill: none;
    stroke: currentColor;
    stroke-width: 1.3;
}

.plain {
    display: flex;
    align-items: center;
    justify-content: center;
}

/* title bar */
.titlebar {
    height: 36px;
    display: grid;
    grid-template-columns: 677fr 418px 505fr;
    background-color: #3b3a39;
    color: white;
}

.titlebar-left {
    display: flex;
    align-items: center;
    padding-left: 16px;
    gap: 13px;
}

.titlebar-left .dim {
    color: #777;
}

.file-name {
    gap: 8px;
    padding-top: 4px;
}

.title-search {
    margin: 5px 0 6px;
    display: flex;
    align-items: center;
    gap: 11px;
    padding-left: 18px;
    background-color: #d4d4d2;
    color: #444;
    font-size: 14px;
}

.title-search input,
.field-search input,
.task-search input {
    flex: 1;
    min-width: 0;
    outline: none;
}

.title-search input::placeholder {
    color: #2f6a5c;
    opacity: 1;
}

.titlebar-right {
    display: flex;
    align-items: center;
    justify-content: flex-end;
    padding-right: 15px;
}

.titlebar-right svg {
    display: block;
}

.sign-in {
    margin-right: 10px;
}

.titlebar-right .plain {
    margin-left: 34px;
}

/* ribbon tabs */
.tabs {
    height: 36px;
    display: flex;
    align-items: center;
    gap: 33px;
    padding: 0 4px 4px 23px;
    background-color: #fafafa;
    font-size: 14px;
}

.tabs .active {
    margin: 3px 0 0 4px;
    font-weight: 600;
    line-height: 24px;
    border-bottom: 3px solid #1f6b58;
}

.share {
    margin-left: auto;
    width: 88px;
    height: 25px;
    display: flex;
    align-items: center;
    justify-content: center;
    gap: 6px;
    border-radius: 3px;
    background-color: #117865;
    color: white;
    font-size: 12px;
}

/* ribbon */
.ribbon {
    height: 95px;
    display: flex;
    background-color: #fafafa;
    border-bottom: 1px solid #e1dfdd;
    box-shadow: 0 1px 3px rgba(0, 0, 0, 0.15);
}

.group {
    display: flex;
    flex-direction: column;
    justify-content: space-between;
    border-right: 1px solid #dddbd9;
}

.group h2 {
    font-size: 10px;
    line-height: 15px;
    text-align: center;
}

.tools {
    display: grid;
    justify-content: center;
    padding-top: 6px;
}

.tool {
    display: flex;
    flex-direction: column;
    align-items: center;
    gap: 4px;
    line-height: 17px;
}

.tool > span {
    width: min-content;
}

.last {
    white-space: nowrap;
}

.off {
    opacity: 0.4;
}

.caret {
    display: inline-block;
    width: 5px;
    height: 5px;
    margin: 0 0 3px 3px;
    border: solid currentColor;
    border-width: 0 1px 1px 0;
    transform: rotate(45deg);
}

.clipboard { width: 168px; }
.data { width: 373px; }
.queries { width: 122px; }
.insert { width: 152px; }
.calculations { width: 194px; }
.sensitivity { width: 78px; }
.share-group { width: 62px; }
.copilot { width: 137px; }

.clipboard .tools { grid-template-columns: 42px 106px; gap: 6px; }
.data .tools { grid-template-columns: 49px 52px 64px 34px 50px 51px 64px; }
.queries .tools { grid-template-columns: 57px 46px; gap: 2px; }
.insert .tools { grid-template-columns: 42px 42px 51px; }
.calculations .tools { grid-template-columns: 74px 56px 46px; }
.copilot .tools { grid-template-columns: 75px 44px; }

.calculations .tool:first-child > span,
.copilot .tool:first-child > span {
    width: 76px;
}

.small-tools {
    display: flex;
    flex-direction: column;
    gap: 9px;
}

.small-tools button {
    display: flex;
    align-items: center;
    gap: 4px;
    line-height: 16px;
    white-space: nowrap;
}

.collapse {
    margin: auto 4px 6px auto;
}

/* work area */
.workspace {
    flex: 1;
    display: flex;
}

.rail {
    width: 42px;
    display: flex;
    flex-direction: column;
    background-color: #f3f2f1;
    color: #666;
}

.rail button {
    height: 42px;
    display: flex;
    flex-direction: column;
    align-items: center;
    justify-content: center;
}

.rail .current {
    height: 40px;
    border-left: 3px solid #117865;
    padding-right: 3px;
    color: #333;
}

.rail small {
    margin-top: -8px;
    font-size: 8px;
    font-weight: 600;
    line-height: 8px;
}

.center {
    flex: 1;
    display: flex;
    flex-direction: column;
}

.canvas {
    flex: 1;
    display: flex;
    background-color: white;
}

.page {
    flex: 1;
    margin: 0 27px 7px 28px;
    border: 1px dotted #333;
    border-top: none;
    display: grid;
    grid-template-columns: 254fr 548fr 254fr;
    gap: 18px;
}

.side {
    display: grid;
    grid-template-rows: repeat(3, 1fr);
    gap: 30px;
}

.card {
    border: 1px solid black;
    border-radius: 16px;
    background-color: white;
    overflow: hidden;
}

.card.rounder {
    border-radius: 26px;
}

.card h3 {
    padding: 6px 36px 0;
    font-family: Roboto, sans-serif;
    font-size: 20px;
    line-height: 24px;
    text-align: center;
    color: #252423;
}

.side .card:not(:last-child) h3 {
    padding: 6px 0 0;
}

.side .card h3.left {
    padding-left: 10px;
    text-align: left;
}

.chart {
    display: block;
    width: 100%;
    height: auto;
}

.chart text {
    font-size: 10px;
    fill: #666;
}

.chart .t11 { font-size: 11px; }
.chart .t12 { font-size: 12px; }
.chart .end { text-anchor: end; }
.chart .mid { text-anchor: middle; }
.chart .strong { font-weight: bold; fill: #444; }

.chart .value {
    font-family: Roboto, sans-serif;
    font-size: 28px;
    font-weight: 300;
    text-anchor: middle;
}

.chart .axis {
    font-family: Roboto, sans-serif;
    font-size: 9px;
    text-anchor: middle;
    fill: #252423;
}

.leader {
    fill: none;
    stroke: #b3b3b3;
}

.gridline {
    stroke: #ddd;
    stroke-dasharray: 1 3;
}

.middle {
    display: flex;
    flex-direction: column;
}

.banner {
    flex: 91;
    display: flex;
    align-items: center;
    justify-content: center;
    border-radius: 20px;
    background-color: black;
    border: 1px solid #0b1d33;
    color: white;
    font-size: 32px;
}

.nav-buttons {
    flex: 81;
    display: flex;
    gap: 8px;
    margin: 12px 0 28px;
    padding-left: 2px;
}

.nav-buttons button {
    flex: 1;
    border-radius: 20px;
    background-color: black;
    color: white;
    font-size: 22px;
    font-weight: bold;
}

.slicers {
    flex: 189;
    display: grid;
    grid-template-columns: 1fr 1fr;
    gap: 38px;
    margin-bottom: 20px;
}

.slicer {
    display: flex;
    flex-direction: column;
    gap: 5px;
    padding: 0 11px;
}

.slicers .slicer {
    margin-top: 2px;
}

.slicers .tall {
    margin: 0 0 2px;
    gap: 18px;
}

.region {
    flex: 192;
}

.slicer h3 {
    padding: 6px 0 16px;
    font-weight: bold;
}

.slicer.tall h3 {
    padding-bottom: 3px;
}

.slicer.region h3 {
    padding-bottom: 0;
}

.slicer button {
    height: 32px;
    padding-top: 6px;
    border-radius: 22px / 50%;
    background-color: black;
    color: white;
    font-family: Roboto, sans-serif;
    font-size: 15px;
    font-weight: bold;
}

.slicer.tall button {
    height: 44px;
    padding-top: 0;
}

/* filters pane */
.filters {
    width: 34px;
    display: flex;
    flex-direction: column;
    align-items: center;
    gap: 15px;
    padding-top: 13px;
    border-left: 1px solid #c8c6c4;
}

.filters h2 {
    writing-mode: vertical-rl;
    font-size: 15px;
    font-weight: 600;
    margin-top: -7px;
}

/* page tabs */
.page-tabs {
    height: 37px;
    display: flex;
    padding-left: 11px;
    background-color: #f3f2f1;
    border-bottom: 1px solid #e6e4e2;
}

.view-mode {
    width: 25px;
    margin-right: 20px;
    padding-bottom: 2px;
    display: flex;
    align-items: center;
    justify-content: center;
    color: #555;
}

.view-mode.on {
    height: 31px;
    border-bottom: 2px solid #117865;
}

.arrows {
    width: 33px;
    display: flex;
    align-items: center;
    gap: 17px;
    fill: #c4c2c0;
}

.page-tab {
    padding: 1px 21px 0 20px;
    line-height: 36px;
    background-color: white;
    border-right: 1px solid #dddbd9;
}

.page-tab.selected {
    padding-left: 21px;
    line-height: 36px;
    border-bottom: 4px solid #1f6b58;
}

.close-page {
    width: 12px;
    height: 18px;
    margin-left: -14px;
    margin-right: 2px;
    font-size: 11px;
}

.add-page {
    width: 40px;
    background-color: #117865;
}

/* right panes */
.pane {
    border-left: 1px solid #dddbd9;
}

.pane-head {
    display: flex;
    justify-content: space-between;
    align-items: center;
    padding: 9px 7px 0 9px;
    line-height: 24px;
}

.pane-head h2 {
    font-size: 16px;
    font-weight: 600;
}

.visualizations {
    width: 188px;
}

.visualizations > h3 {
    padding: 6px 9px 0;
    font-weight: 600;
    line-height: 18px;
}

.modes {
    display: flex;
    gap: 36px;
    padding: 2px 9px 0;
}

.modes button {
    width: 33px;
    height: 33px;
    display: flex;
    align-items: center;
    justify-content: center;
}

.modes .chosen {
    background-color: #d2d0ce;
}

.pointer {
    display: block;
    margin: 5px 0 -1px 15px;
    position: relative;
}

.viz-grid {
    display: grid;
    grid-template-columns: repeat(6, 29px);
    grid-auto-rows: 29px;
    padding: 7px 0 0 6px;
    border-top: 1px solid #b5b3b1;
}

.viz-grid button {
    display: flex;
    align-items: center;
    justify-content: center;
}

.viz-grid svg {
    width: 20px;
    height: 20px;
    fill: none;
    stroke: #444;
}

.viz-grid text {
    font-size: 9px;
    text-anchor: middle;
    fill: #2f87c5;
    stroke: none;
}

.viz-grid .b { fill: #6cb4ee; stroke: #2b6a9c; }
.viz-grid .w { fill: white; }
.viz-grid .g { fill: #c4c2c0; stroke: #777; }
.viz-grid .o { fill: #f5b04d; stroke: #c97a1e; }
.viz-grid .green { stroke: #3a7d5a; }
.viz-grid .purple { fill: white; stroke: #a0428c; }

.viz-grid .letters {
    color: #2f7fae;
    font-size: 16px;
    font-weight: bold;
}

.more {
    margin-left: 12px;
    height: 20px;
    font-size: 16px;
}

.wells {
    margin-top: 15px;
    padding: 9px 5px 0;
    border-top: 1px solid #dddbd9;
}

.wells h3 {
    padding: 0 7px;
    line-height: 18px;
}

.well {
    margin: 6px 0 11px;
    padding: 0 8px;
    border: 1px dashed #dddbd9;
    background-color: white;
    line-height: 26px;
    white-space: nowrap;
}

.well.indent {
    padding-left: 10px;
}

.option {
    display: flex;
    justify-content: space-between;
    align-items: center;
    padding: 0 17px 0 7px;
    margin-top: 3px;
    line-height: 26px;
}

.option + .well {
    margin-top: 5px;
}

.switch {
    display: grid;
    align-items: center;
}

.switch input,
.switch span {
    grid-area: 1 / 1;
}

.switch input {
    appearance: none;
    width: 34px;
    height: 17px;
    margin: 0;
    border: 1px solid #777;
    border-radius: 9px;
    background: radial-gradient(circle at 9px 50%, #555 4px, white 5px);
}

.switch input:checked {
    border-color: #117865;
    background: radial-gradient(circle at 24px 50%, white 4px, #117865 5px);
}

.switch span {
    justify-self: end;
    padding-right: 5px;
    font-size: 9px;
    line-height: 16px;
    pointer-events: none;
}

.switch input:checked + span {
    justify-self: start;
    padding-left: 5px;
    color: white;
}

.fields {
    width: 188px;
}

.field-search {
    height: 25px;
    margin: 14px 3px 0 5px;
    padding-left: 12px;
    display: flex;
    align-items: center;
    gap: 7px;
    border: 1px solid #e1dfdd;
    border-bottom-color: #999;
    border-radius: 4px;
    background-color: white;
    font-size: 14px;
    color: #666;
}

.table-row {
    display: flex;
    align-items: center;
    gap: 6px;
    padding: 14px 0 0 16px;
    white-space: nowrap;
}

.table-row svg:nth-child(2) {
    margin-left: 2px;
}

/* status bar */
.status {
    height: 24px;
    display: flex;
    align-items: center;
    justify-content: space-between;
    padding: 0 17px 0 4px;
    color: #555;
}

.zoom {
    display: flex;
    align-items: center;
}

.zoom .plain {
    font-size: 14px;
}

.zoom span {
    margin: 0 18px 0 14px;
}

.zoom input {
    appearance: none;
    width: 105px;
    height: 12px;
    margin: 0 6px 0 5px;
    background: linear-gradient(#777, #777) center / 100% 1px no-repeat;
}

.zoom input::-webkit-slider-thumb {
    appearance: none;
    width: 4px;
    height: 11px;
    background-color: #555;
}

/* taskbar */
.taskbar {
    height: 49px;
    display: grid;
    grid-template-columns: 1fr auto 1fr;
    align-items: center;
    padding-left: 2px;
    background-color: #1c1c1c;
    color: white;
}

.weather {
    display: flex;
    align-items: center;
    gap: 4px;
    padding-left: 19px;
    line-height: 17px;
}

.weather text {
    font-size: 11px;
    fill: #222;
}

.weather span {
    color: #bbb;
}

.apps {
    display: flex;
    align-items: center;
    padding-top: 2px;
}

.apps button {
    position: relative;
    width: 46px;
    height: 43px;
    display: flex;
    align-items: center;
    justify-content: center;
}

.apps button:first-child {
    width: 51px;
}

.search-wrap {
    position: relative;
    margin-right: 1px;
}

.task-search {
    width: 230px;
    height: 33px;
    padding: 0 20px 0 13px;
    display: flex;
    align-items: center;
    gap: 10px;
    border-radius: 17px;
    background-color: #404040;
    font-size: 14px;
    color: #ddd;
}

.task-search input::placeholder {
    color: #bbb;
}

.tooltip {
    position: absolute;
    right: -27px;
    bottom: 22px;
    z-index: 1;
    padding: 0 9px;
    border-radius: 4px;
    background-color: #2b2b2b;
    line-height: 31px;
}

.apps .open::after {
    content: "";
    position: absolute;
    bottom: 0;
    left: 20px;
    width: 6px;
    height: 3px;
    border-radius: 2px;
    background-color: #999;
}

.apps .front {
    background-color: #2a2a2a;
    border-radius: 4px;
}

.apps .front::after {
    left: 15px;
    width: 16px;
    background-color: #5cb8f0;
}

.badge {
    position: absolute;
    top: 2px;
    right: 2px;
    width: 20px;
    height: 17px;
    border-radius: 9px;
    background-color: #5cc0f5;
    color: #123;
    font-size: 11px;
    line-height: 17px;
}

.badge.face {
    top: 4px;
    right: 8px;
    width: 15px;
    height: 15px;
    background-color: #3aa0c8;
}

.tray {
    display: flex;
    align-items: center;
    justify-content: flex-end;
    gap: 7px;
    padding-right: 19px;
}

.mic {
    width: 32px;
    height: 41px;
    margin-left: 5px;
    display: grid;
    place-items: center;
    border-radius: 4px;
    background-color: #2a2a2a;
}

.lang {
    margin: 0 9px 0 5px;
}

.clock {
    margin-left: 9px;
    line-height: 17px;
    text-align: right;
}
```
